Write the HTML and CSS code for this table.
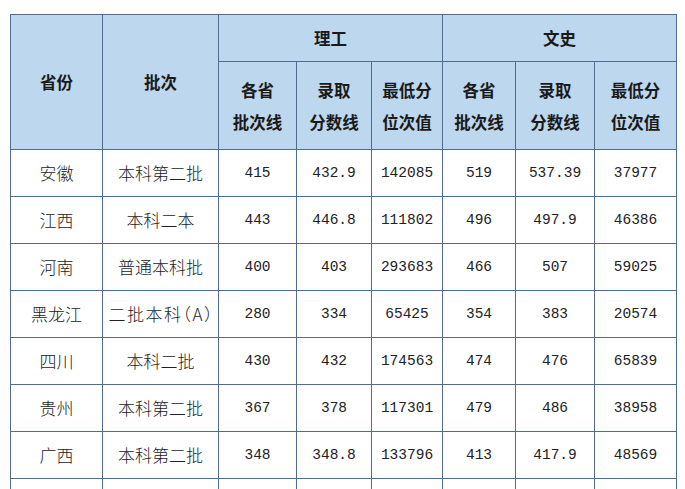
FILE: index.html
```html
<!DOCTYPE html>
<html lang="zh-CN">
<head>
<meta charset="utf-8">
<link rel="stylesheet" href="styles.css">
</head>
<body>
<table class="score">
  <colgroup>
    <col class="c1"><col class="c2"><col class="c3"><col class="c4"><col class="c5"><col class="c6"><col class="c7"><col class="c8">
  </colgroup>
  <thead>
    <tr class="h1">
      <th rowspan="2">省份</th>
      <th rowspan="2">批次</th>
      <th colspan="3">理工</th>
      <th colspan="3">文史</th>
    </tr>
    <tr class="h2">
      <th>各省<br>批次线</th>
      <th>录取<br>分数线</th>
      <th>最低分<br>位次值</th>
      <th>各省<br>批次线</th>
      <th>录取<br>分数线</th>
      <th>最低分<br>位次值</th>
    </tr>
  </thead>
  <tbody>
    <tr><td>安徽</td><td>本科第二批</td><td class="n">415</td><td class="n">432.9</td><td class="n">142085</td><td class="n">519</td><td class="n">537.39</td><td class="n">37977</td></tr>
    <tr><td>江西</td><td>本科二本</td><td class="n">443</td><td class="n">446.8</td><td class="n">111802</td><td class="n">496</td><td class="n">497.9</td><td class="n">46386</td></tr>
    <tr><td>河南</td><td>普通本科批</td><td class="n">400</td><td class="n">403</td><td class="n">293683</td><td class="n">466</td><td class="n">507</td><td class="n">59025</td></tr>
    <tr><td>黑龙江</td><td class="tight">二批本科（A）</td><td class="n">280</td><td class="n">334</td><td class="n">65425</td><td class="n">354</td><td class="n">383</td><td class="n">20574</td></tr>
    <tr><td>四川</td><td>本科二批</td><td class="n">430</td><td class="n">432</td><td class="n">174563</td><td class="n">474</td><td class="n">476</td><td class="n">65839</td></tr>
    <tr><td>贵州</td><td>本科第二批</td><td class="n">367</td><td class="n">378</td><td class="n">117301</td><td class="n">479</td><td class="n">486</td><td class="n">38958</td></tr>
    <tr><td>广西</td><td>本科第二批</td><td class="n">348</td><td class="n">348.8</td><td class="n">133796</td><td class="n">413</td><td class="n">417.9</td><td class="n">48569</td></tr>
    <tr><td></td><td></td><td></td><td></td><td></td><td></td><td></td><td></td></tr>
  </tbody>
</table>
</body>
</html>
```
FILE: styles.css
```css
html, body {
  margin: 0;
  padding: 0;
  background: #ffffff;
  overflow: hidden;
}
body {
  padding: 14px 0 0 10px;
  font-family: "Noto Sans CJK SC", sans-serif;
  color: #1e1e1e;
}
.score {
  border-collapse: collapse;
  table-layout: fixed;
  width: 666px;
}
.c1 { width: 92px; }
.c2 { width: 116px; }
.c3 { width: 78px; }
.c4 { width: 75px; }
.c5 { width: 71px; }
.c6 { width: 73px; }
.c7 { width: 79px; }
.c8 { width: 82px; }
.score th, .score td {
  border: 1px solid #506d90;
  padding: 0;
  text-align: center;
  vertical-align: middle;
}
.score th {
  background: #bdd7ee;
  font-weight: 700;
  font-size: 16.5px;
  color: #1a1a1a;
}
.h1 { height: 47px; }
.h2 { height: 88px; }
.h2 th { line-height: 32px; }
.score td {
  height: 46px;
  font-size: 17px;
  line-height: 20px;
  font-weight: 300;
  color: #222;
}
.score td.tight {
  font-feature-settings: "halt";
  letter-spacing: 1.5px;
  text-indent: 1.5px;
}
.score td.n {
  font-family: "Liberation Mono", monospace;
  font-size: 14.5px;
  font-weight: 400;
}
```
